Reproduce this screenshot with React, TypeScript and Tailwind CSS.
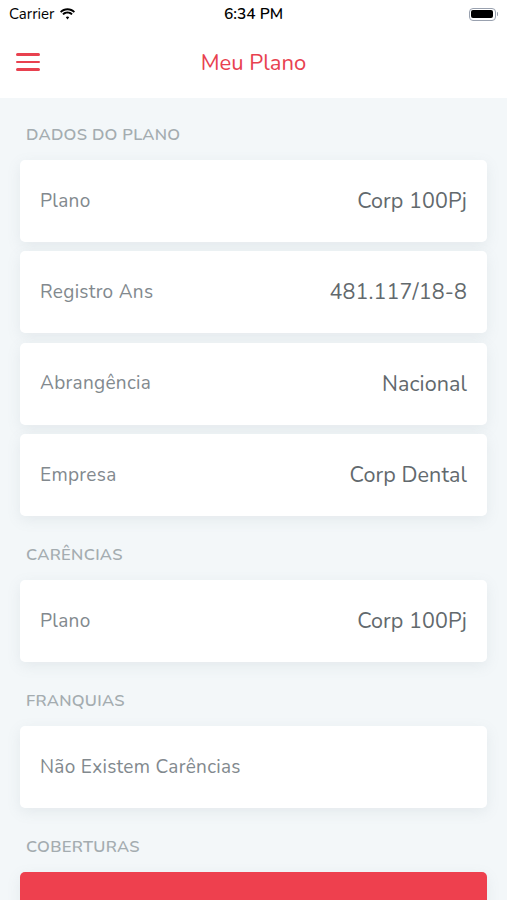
import type { ReactElement } from 'react';

type Row = { label: string; value?: string };

const dados: Row[] = [
  { label: 'Plano', value: 'Corp 100Pj' },
  { label: 'Registro Ans', value: '481.117/18-8' },
  { label: 'Abrangência', value: 'Nacional' },
  { label: 'Empresa', value: 'Corp Dental' },
];

function StatusBar(): ReactElement {
  return (
    <div className="flex h-[28px] items-center justify-between bg-white px-[9px] text-[15px] text-black">
      <div className="flex w-[120px] items-center gap-[5px]">
        <span>Carrier</span>
        <svg width="17" height="12" viewBox="0 0 17 12" fill="black">
          <path d="M8.5 2.2c2.4 0 4.6.9 6.2 2.5l1.3-1.3C14 1.4 11.4.3 8.5.3S3 1.4 1 3.4l1.3 1.3C3.9 3.1 6.1 2.2 8.5 2.2z" />
          <path d="M8.5 5.4c1.5 0 2.9.6 3.9 1.6l1.3-1.3C12.4 4.4 10.5 3.5 8.5 3.5S4.6 4.4 3.3 5.7L4.6 7c1-1 2.4-1.6 3.9-1.6z" />
          <path d="M8.5 8.6c.7 0 1.3.3 1.7.7l-1.7 2.2-1.7-2.2c.4-.4 1-.7 1.7-.7z" />
        </svg>
      </div>
      <span className="text-[15.5px] font-semibold">6:34 PM</span>
      <div className="flex w-[120px] justify-end">
        <div className="flex items-center">
          <div className="flex h-[13px] w-[27px] items-center rounded-[4px] border border-gray-400 p-[1.5px]">
            <div className="h-full w-full rounded-[2px] bg-black" />
          </div>
          <div className="ml-[1px] h-[4px] w-[1.5px] rounded-r bg-gray-400" />
        </div>
      </div>
    </div>
  );
}

function SectionTitle({ title, first }: { title: string; first?: boolean }): ReactElement {
  return (
    <div className={`flex items-end px-[26px] pb-[15px] ${first ? 'h-[62px]' : 'h-[64px]'}`}>
      <h2 className="text-[16.5px] leading-[20px] font-semibold tracking-[0.3px] text-[#a4acb0]">{title}</h2>
    </div>
  );
}

function Card({ row }: { row: Row }): ReactElement {
  return (
    <div className="flex h-[82px] items-center justify-between rounded-[5px] bg-white px-[20px] shadow-[0_4px_14px_rgba(120,140,150,0.12)]">
      <span className="text-[19px] tracking-[0.3px] text-[#82898e]">{row.label}</span>
      {row.value ? <span className="text-[21.5px] tracking-[0.1px] text-[#62696d]">{row.value}</span> : null}
    </div>
  );
}

export default function App(): ReactElement {
  return (
    <div className="h-[900px] w-[507px] overflow-hidden bg-[#f3f7f9] font-['Nunito','Noto_Sans',sans-serif]">
      <StatusBar />
      <header className="relative flex h-[70px] items-center justify-center bg-white">
        <button type="button" className="absolute left-[16px] top-[25px] flex flex-col gap-[5px]">
          <span className="block h-[2.5px] w-[24px] rounded bg-[#e8414f]" />
          <span className="block h-[2.5px] w-[24px] rounded bg-[#e8414f]" />
          <span className="block h-[2.5px] w-[24px] rounded bg-[#e8414f]" />
        </button>
        <h1 className="text-[22px] text-[#e8414f]">Meu Plano</h1>
      </header>

      <main>
        <SectionTitle title="DADOS DO PLANO" first />
        <div className="flex flex-col gap-[9.33px] px-[20px]">
          {dados.map((row) => (
            <Card key={row.label} row={row} />
          ))}
        </div>

        <SectionTitle title="CARÊNCIAS" />
        <div className="px-[20px]">
          <Card row={{ label: 'Plano', value: 'Corp 100Pj' }} />
        </div>

        <SectionTitle title="FRANQUIAS" />
        <div className="px-[20px]">
          <Card row={{ label: 'Não Existem Carências' }} />
        </div>

        <SectionTitle title="COBERTURAS" />
        <div className="px-[20px]">
          <div className="h-[82px] rounded-[5px] bg-[#ee404e] shadow-[0_4px_14px_rgba(120,140,150,0.12)]" />
        </div>
      </main>
    </div>
  );
}
